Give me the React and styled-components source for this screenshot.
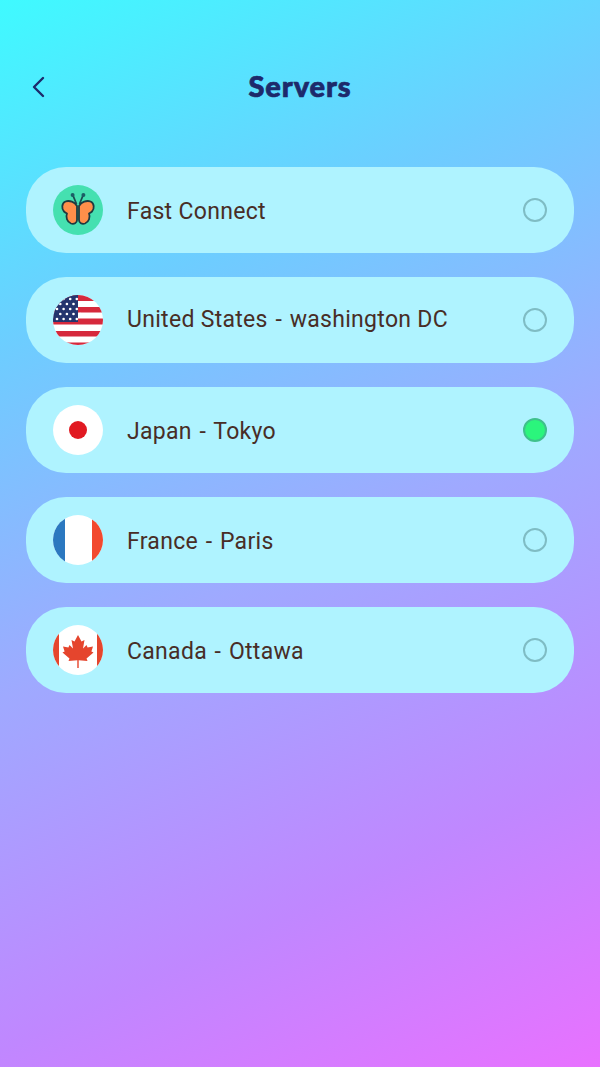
import styled, { createGlobalStyle } from 'styled-components';

const GlobalStyle = createGlobalStyle`
  html, body { margin: 0; padding: 0; }
  body { font-family: Roboto, "Liberation Sans", sans-serif; }
`;

const Page = styled.div`
  width: 600px;
  height: 1067px;
  overflow: hidden;
  background: linear-gradient(155deg, #3ffaff 0%, #6dcdff 26%, #9fa9ff 52%, #c087ff 78%, #e871ff 100%);
`;

const Header = styled.header`
  display: flex;
  align-items: center;
  justify-content: center;
  height: 60px;
  margin-top: 55px;
  margin-bottom: 52px;
  position: relative;
`;

const BackButton = styled.button`
  position: absolute;
  left: 25px;
  top: 17px;
  width: 26px;
  height: 30px;
  padding: 0;
  border: none;
  background: none;
  display: flex;
  align-items: center;
  justify-content: center;
`;

const Title = styled.h1`
  margin: 0;
  font-family: Lato, sans-serif;
  font-size: 29px;
  font-weight: 900;
  color: #1d2a6b;
  letter-spacing: 0.9px;
  -webkit-text-stroke: 0.7px #1d2a6b;
`;

const List = styled.ul`
  list-style: none;
  margin: 0 26px;
  padding: 0;
  display: flex;
  flex-direction: column;
  gap: 24px;
`;

const Row = styled.li`
  height: 86px;
  border-radius: 40px;
  background: #aff3ff;
  display: flex;
  align-items: center;
  padding: 0 27px;
`;

const Flag = styled.span`
  width: 50px;
  height: 50px;
  flex: none;
  display: block;
  svg { display: block; }
`;

const Label = styled.span`
  flex: 1;
  margin-left: 24px;
  font-size: 23px;
  letter-spacing: 0.3px;
  color: #482d26;
  padding: ${(p) => (p.$high ? '0 0 2px' : '2px 0 0')};
`;

const Dash = styled.span`
  margin: 0 1.6px;
`;

const Radio = styled.span`
  width: 24px;
  height: 24px;
  box-sizing: border-box;
  flex: none;
  border-radius: 50%;
  border: 2px solid ${(p) => (p.$on ? '#3fc08c' : '#7fbcc4')};
  background: ${(p) => (p.$on ? '#2bf57c' : 'transparent')};
`;

const Butterfly = () => (
  <svg width="50" height="50" viewBox="0 0 50 50">
    <circle cx="25" cy="25" r="25" fill="#45e0b0" />
    <path d="M23.5 19 L20 10.5 M26.5 19 L30 10.5" stroke="#1d4a50" strokeWidth="1.8" fill="none" />
    <circle cx="19.6" cy="10" r="2" fill="#1c5f66" />
    <circle cx="30.4" cy="10" r="2" fill="#1c5f66" />
    <path
      d="M24 21 C21.5 17 16.5 15 12.5 16.5 C8.5 18 8.5 24 11 26.5 C12 27.5 13 28 14 28.5 C12.5 32 14 37 18 38.5 C21 39.5 24 38 24 35 Z"
      fill="#ff8f4a"
      stroke="#1d3b40"
      strokeWidth="1.8"
      strokeLinejoin="round"
    />
    <path
      d="M26 21 C28.5 17 33.5 15 37.5 16.5 C41.5 18 41.5 24 39 26.5 C38 27.5 37 28 36 28.5 C37.5 32 36 37 32 38.5 C29 39.5 26 38 26 35 Z"
      fill="#ff8f4a"
      stroke="#1d3b40"
      strokeWidth="1.8"
      strokeLinejoin="round"
    />
  </svg>
);

const UsaFlag = () => {
  const stars = [];
  for (let r = 0; r < 5; r++) {
    for (let c = 0; c < 4; c++) {
      stars.push(<circle key={`${r}-${c}`} cx={4 + c * 6.6 + (r % 2) * 3.3} cy={4 + r * 5} r="1.3" fill="#fff" />);
    }
  }
  return (
    <svg width="50" height="50" viewBox="0 0 50 50">
      <defs>
        <clipPath id="usa-clip">
          <circle cx="25" cy="25" r="25" />
        </clipPath>
      </defs>
      <g clipPath="url(#usa-clip)">
        <rect width="50" height="50" fill="#fff" />
        <rect y="0" width="50" height="6" fill="#d6293c" />
        <rect y="12" width="50" height="5.5" fill="#d6293c" />
        <rect y="23.5" width="50" height="6" fill="#d6293c" />
        <rect y="36" width="50" height="5.5" fill="#d6293c" />
        <rect y="47.5" width="50" height="2.5" fill="#d6293c" />
        <rect width="25" height="27" fill="#24346e" />
        {stars}
      </g>
    </svg>
  );
};

const JapanFlag = () => (
  <svg width="50" height="50" viewBox="0 0 50 50">
    <circle cx="25" cy="25" r="25" fill="#fff" />
    <circle cx="25" cy="25" r="9" fill="#e11a22" />
  </svg>
);

const FranceFlag = () => (
  <svg width="50" height="50" viewBox="0 0 50 50">
    <defs>
      <clipPath id="fr-clip">
        <circle cx="25" cy="25" r="25" />
      </clipPath>
    </defs>
    <g clipPath="url(#fr-clip)">
      <rect width="50" height="50" fill="#fff" />
      <rect width="12" height="50" fill="#2b78c0" />
      <rect x="39" width="11" height="50" fill="#f2492f" />
    </g>
  </svg>
);

const CanadaFlag = () => (
  <svg width="50" height="50" viewBox="0 0 50 50">
    <defs>
      <clipPath id="ca-clip">
        <circle cx="25" cy="25" r="25" />
      </clipPath>
    </defs>
    <g clipPath="url(#ca-clip)">
      <rect width="50" height="50" fill="#fff" />
      <rect width="6" height="50" fill="#e5452d" />
      <rect x="44" width="6" height="50" fill="#e5452d" />
    </g>
    <path
      d="M25 10 L28.5 16.5 L31.5 15 L30 23.5 L33.5 20 L34.6 22.5 L40 21.5 L38.4 26.5 L40.5 27.5 L33.5 33.5 L34.5 36 L25.7 35.2 L25.7 43 L24.3 43 L24.3 35.2 L15.5 36 L16.5 33.5 L9.5 27.5 L11.6 26.5 L10 21.5 L15.4 22.5 L16.5 20 L20 23.5 L18.5 15 L21.5 16.5 Z"
      fill="#e5452d"
    />
  </svg>
);

const servers = [
  { name: 'Fast Connect', Icon: Butterfly },
  { name: 'United States - washington DC', Icon: UsaFlag, high: true },
  { name: 'Japan - Tokyo', Icon: JapanFlag, selected: true },
  { name: 'France - Paris', Icon: FranceFlag },
  { name: 'Canada - Ottawa', Icon: CanadaFlag },
];

const App = () => (
  <Page>
    <GlobalStyle />
    <Header>
      <BackButton aria-label="Back">
        <svg width="14" height="22" viewBox="0 0 14 22" fill="none">
          <path d="M12 2 L3 11 L12 20" stroke="#1d2a6b" strokeWidth="2.4" strokeLinecap="round" strokeLinejoin="round" />
        </svg>
      </BackButton>
      <Title>Servers</Title>
    </Header>
    <List>
      {servers.map(({ name, Icon, selected, high }) => {
        const [place, city] = name.split(' - ');
        return (
          <Row key={name}>
            <Flag>
              <Icon />
            </Flag>
            <Label $high={high}>
              {place}
              {city && (
                <>
                  {' '}
                  <Dash>-</Dash> {city}
                </>
              )}
            </Label>
            <Radio $on={selected} />
          </Row>
        );
      })}
    </List>
  </Page>
);

export default App;
